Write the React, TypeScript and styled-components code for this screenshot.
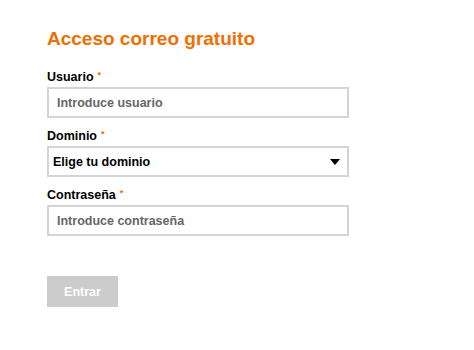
import React from 'react';
import styled, { createGlobalStyle } from 'styled-components';

const GlobalStyle = createGlobalStyle`
  html, body {
    margin: 0;
    padding: 0;
    background: #ffffff;
  }
  body {
    font-family: 'Liberation Sans', Arial, sans-serif;
    color: #000;
  }
`;

const Page = styled.div`
  padding: 28px 0 0 47px;
`;

const Title = styled.h1`
  margin: 0 0 19px;
  font-size: 19px;
  line-height: 22px;
  font-weight: 700;
  color: #f16e00;
`;

const Form = styled.form`
  display: flex;
  flex-direction: column;
  gap: 10px;
  width: 302px;
`;

const Field = styled.div`
  display: flex;
  flex-direction: column;
  gap: 2px;
`;

const Label = styled.label`
  display: block;
  height: 16px;
  font-size: 12.5px;
  line-height: 16px;
  font-weight: 700;
  color: #000;
`;

const Required = styled.span`
  color: #f16e00;
  font-size: 9px;
  line-height: 0;
  vertical-align: 3px;
  margin-left: 4px;
`;

const TextInput = styled.input`
  box-sizing: border-box;
  width: 100%;
  height: 31px;
  margin: 0;
  padding: 0 8px;
  border: 2px solid #d4d4d4;
  border-radius: 0;
  outline: none;
  font-family: inherit;
  font-size: 12.5px;
  font-weight: 700;
  color: #000;
  &::placeholder {
    color: #666;
    opacity: 1;
  }
`;

const SelectWrap = styled.div`
  position: relative;
`;

const Select = styled.select`
  box-sizing: border-box;
  width: 100%;
  height: 31px;
  margin: 0;
  padding: 0 28px 0 4px;
  border: 2px solid #d4d4d4;
  border-radius: 0;
  background: #fff;
  appearance: none;
  outline: none;
  font-family: inherit;
  font-size: 12.5px;
  font-weight: 700;
  color: #000;
`;

const Caret = styled.svg`
  position: absolute;
  right: 9px;
  top: 13px;
  pointer-events: none;
`;

const Submit = styled.button<{ $disabled?: boolean }>`
  align-self: flex-start;
  margin-top: 30px;
  width: 71px;
  height: 31px;
  padding: 0;
  border: none;
  background: ${(p) => (p.$disabled ? '#cccccc' : '#f16e00')};
  color: #fff;
  font-family: inherit;
  font-size: 12.5px;
  font-weight: 700;
`;

export default function App() {
  return (
    <>
      <GlobalStyle />
      <Page>
        <Title>Acceso correo gratuito</Title>
        <Form onSubmit={(e) => e.preventDefault()}>
          <Field>
            <Label htmlFor="usuario">
              Usuario<Required>*</Required>
            </Label>
            <TextInput id="usuario" placeholder="Introduce usuario" />
          </Field>
          <Field>
            <Label htmlFor="dominio">
              Dominio<Required>*</Required>
            </Label>
            <SelectWrap>
              <Select id="dominio" defaultValue="">
                <option value="">Elige tu dominio</option>
                <option value="orange.es">orange.es</option>
              </Select>
              <Caret width="10" height="6" viewBox="0 0 10 6">
                <path d="M0 0h10L5 6z" fill="#000" />
              </Caret>
            </SelectWrap>
          </Field>
          <Field>
            <Label htmlFor="pass">
              Contraseña<Required>*</Required>
            </Label>
            <TextInput
              id="pass"
              type="password"
              placeholder="Introduce contraseña"
            />
          </Field>
          <Submit type="submit" $disabled disabled>
            Entrar
          </Submit>
        </Form>
      </Page>
    </>
  );
}
